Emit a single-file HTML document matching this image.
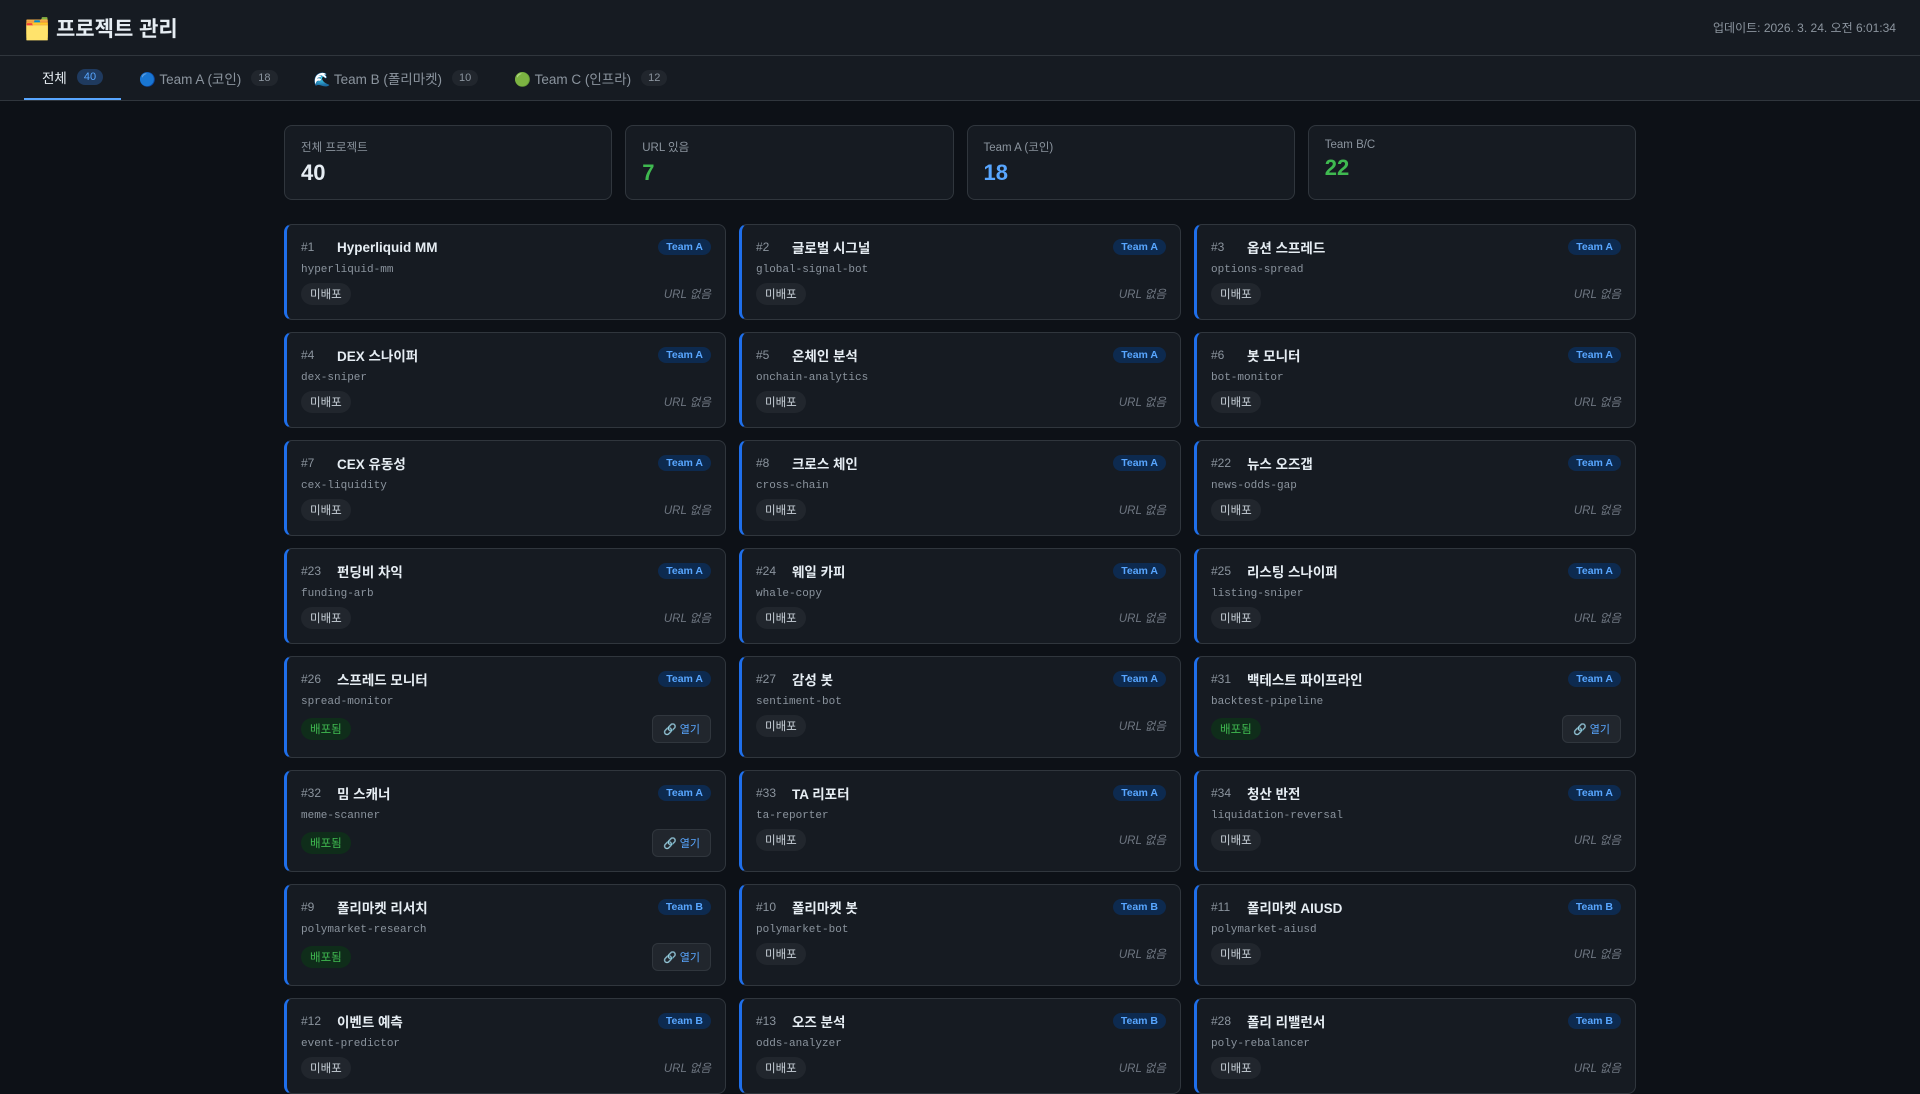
<!DOCTYPE html>
<html><head><meta charset="utf-8"><style>
*{box-sizing:border-box;margin:0;padding:0}
body{width:1920px;height:1080px;overflow:hidden;background:#0d1117;font-family:"Liberation Sans","Noto Sans CJK KR",sans-serif;color:#e6edf3}
.hdr{height:56px;background:#161b22;border-bottom:1px solid #30363d;display:flex;align-items:center;justify-content:space-between;padding:0 24px}
.hdr h1{font-size:21px;font-weight:700;color:#e6edf3}
.hdr .up{font-size:12px;color:#8b949e}
.tabs{height:45px;background:#161b22;border-bottom:1px solid #30363d;padding:0 24px;display:flex}
.tab{padding:0 18px;display:flex;align-items:center;font-size:13.5px;color:#8b949e;height:44px}
.tab.on{color:#e6edf3;border-bottom:2px solid #58a6ff}
.cnt{margin-left:10px;font-size:11px;padding:2px 7px;border-radius:10px;background:#21262d;color:#8b949e}
.tab.on .cnt{background:#1f3a5f;color:#58a6ff}
.wrap{width:1352px;margin:24px auto 0}
.stats{display:grid;grid-template-columns:repeat(4,1fr);gap:13px;margin-bottom:24px}
.st{height:75px;background:#161b22;border:1px solid #30363d;border-radius:8px;padding:13px 16px}
.st .l{font-size:11.5px;color:#8b949e}
.st .v{font-size:22px;font-weight:700;margin-top:5px}
.grid{display:grid;grid-template-columns:repeat(3,1fr);gap:12px 13px}
.c{background:#161b22;border:1px solid #30363d;border-left:3px solid #1f6feb;border-radius:8px;padding:12px 14px 14px 14px;min-height:96px}
.t{display:flex;align-items:center;height:20px}
.n{width:36px;font-size:12px;color:#8b949e}
.nm{font-size:13.5px;font-weight:700;color:#e6edf3;flex:1}
.b{font-size:10.5px;font-weight:700;padding:2px 8px;border-radius:10px;background:#0d2a4f;color:#58a6ff}
.s{font-family:"Liberation Mono",monospace;font-size:11px;color:#8b949e;height:16px;line-height:16px;margin-top:5px}
.f{display:flex;justify-content:space-between;align-items:center;margin-top:5px;min-height:22px}
.p{font-size:11.5px;padding:3px 9px;border-radius:11px;background:#21262d;color:#c9d1d9}
.p.d{background:#0f2d1a;color:#3fb950}
.nu{font-size:11.5px;font-style:italic;color:#6e7681}
.o{font-size:11px;border:1px solid #30363d;background:#21262d;color:#58a6ff;border-radius:6px;padding:5px 10px}
</style></head><body>
<div class="hdr"><h1>🗂️ 프로젝트 관리</h1><div class="up">업데이트: 2026. 3. 24. 오전 6:01:34</div></div>
<div class="tabs">
<div class="tab on">전체<span class="cnt">40</span></div>
<div class="tab">🔵 Team A (코인)<span class="cnt">18</span></div>
<div class="tab">🌊 Team B (폴리마켓)<span class="cnt">10</span></div>
<div class="tab">🟢 Team C (인프라)<span class="cnt">12</span></div>
</div>
<div class="wrap">
<div class="stats">
<div class="st"><div class="l">전체 프로젝트</div><div class="v">40</div></div>
<div class="st"><div class="l">URL 있음</div><div class="v" style="color:#3fb950">7</div></div>
<div class="st"><div class="l">Team A (코인)</div><div class="v" style="color:#58a6ff">18</div></div>
<div class="st"><div class="l">Team B/C</div><div class="v" style="color:#3fb950;margin-top:4px">22</div></div>
</div>
<div class="grid" id="g"></div>
</div>
<script>
var d=[[1,"Hyperliquid MM","hyperliquid-mm","A",0],[2,"글로벌 시그널","global-signal-bot","A",0],[3,"옵션 스프레드","options-spread","A",0],
[4,"DEX 스나이퍼","dex-sniper","A",0],[5,"온체인 분석","onchain-analytics","A",0],[6,"봇 모니터","bot-monitor","A",0],
[7,"CEX 유동성","cex-liquidity","A",0],[8,"크로스 체인","cross-chain","A",0],[22,"뉴스 오즈갭","news-odds-gap","A",0],
[23,"펀딩비 차익","funding-arb","A",0],[24,"웨일 카피","whale-copy","A",0],[25,"리스팅 스나이퍼","listing-sniper","A",0],
[26,"스프레드 모니터","spread-monitor","A",1],[27,"감성 봇","sentiment-bot","A",0],[31,"백테스트 파이프라인","backtest-pipeline","A",1],
[32,"밈 스캐너","meme-scanner","A",1],[33,"TA 리포터","ta-reporter","A",0],[34,"청산 반전","liquidation-reversal","A",0],
[9,"폴리마켓 리서치","polymarket-research","B",1],[10,"폴리마켓 봇","polymarket-bot","B",0],[11,"폴리마켓 AIUSD","polymarket-aiusd","B",0],
[12,"이벤트 예측","event-predictor","B",0],[13,"오즈 분석","odds-analyzer","B",0],[28,"폴리 리밸런서","poly-rebalancer","B",0]];
var h="";d.forEach(function(x){h+='<div class="c"><div class="t"><span class="n">#'+x[0]+'</span><span class="nm">'+x[1]+'</span><span class="b">Team '+x[3]+'</span></div><div class="s">'+x[2]+'</div><div class="f">'+(x[4]?'<span class="p d">배포됨</span><span class="o">🔗 열기</span>':'<span class="p">미배포</span><span class="nu">URL 없음</span>')+'</div></div>'});
document.getElementById("g").innerHTML=h;
</script>
</body></html>
